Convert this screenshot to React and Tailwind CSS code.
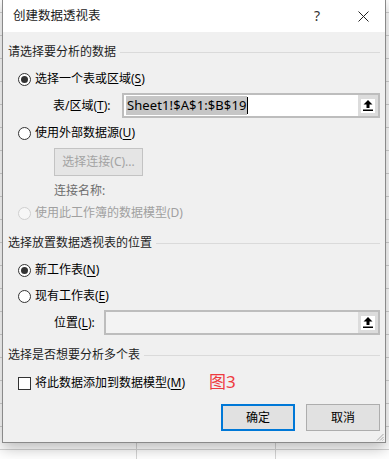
import React from "react";

function Radio({ checked, disabled }) {
  return (
    <span
      className={`w-[13px] h-[13px] shrink-0 rounded-full border flex items-center justify-center ${
        disabled ? "border-[#cfcfcf] bg-[#f7f7f7]" : "border-[#333333] bg-white"
      }`}
    >
      {checked && <span className="w-[7px] h-[7px] rounded-full bg-[#333333]" />}
    </span>
  );
}

function U({ children }) {
  return <span className="underline underline-offset-[2px] decoration-[1px]">{children}</span>;
}

function Section({ children }) {
  return (
    <div className="h-[20px] flex items-center pl-[5px] pr-[5px]">
      <span className="text-[#1e1e1e]">{children}</span>
      <div className="flex-1 h-px bg-[#dadada] ml-[4px]" />
    </div>
  );
}

function UpBtn() {
  return (
    <div className="w-[20px] h-full bg-[#dcdcdc] flex items-center justify-center">
      <div className="w-[14px] h-[14px] bg-white flex items-center justify-center">
        <svg width="10" height="11" viewBox="0 0 10 11">
          <path d="M5 0 L9.5 4.5 H6.5 V8 H3.5 V4.5 H0.5 Z" fill="#000" />
          <rect x="0" y="9.5" width="10" height="1.5" fill="#000" />
        </svg>
      </div>
    </div>
  );
}

export default function App() {
  return (
    <div className="relative w-[389px] h-[459px] overflow-hidden bg-white font-['Noto_Sans','Noto_Sans_CJK_SC',sans-serif] text-[12px] leading-none text-black">
      <svg className="absolute inset-0" width="389" height="459">
        <line x1="136.5" y1="0" x2="136.5" y2="459" stroke="#d4d4d4" />
        <line x1="275.5" y1="0" x2="275.5" y2="459" stroke="#d4d4d4" />
        {[12, 35, 58, 81, 104, 127, 150, 173, 196, 219, 242, 265, 288, 311, 334, 357, 380, 403, 426, 449].map((y) => (
          <line key={y} x1="0" y1={y + 0.5} x2="389" y2={y + 0.5} stroke="#d4d4d4" />
        ))}
      </svg>
      <div className="relative ml-[2px] w-[384px] h-[443px] border-l border-r border-b border-[#8a8a8a] bg-[#f0f0f0] shadow-[0_5px_14px_rgba(0,0,0,0.28)] flex flex-col">
        {/* title bar */}
        <div className="h-[32px] bg-white flex items-center pl-[10px] shrink-0">
          <span className="text-[12.5px] text-[#1a1a1a]">创建数据透视表</span>
          <span className="ml-auto text-[14px] text-[#333] w-[20px] text-center">?</span>
          <div className="w-[44px] flex justify-center ml-[14px] mr-0">
            <svg width="11" height="11" viewBox="0 0 11 11">
              <path d="M0.5 0.5 L10.5 10.5 M10.5 0.5 L0.5 10.5" stroke="#222" strokeWidth="1" />
            </svg>
          </div>
        </div>

        <div className="mt-[10px]">
          <Section>请选择要分析的数据</Section>
        </div>

        <div className="mt-[7px] h-[20px] flex items-center pl-[15px] gap-[4px]">
          <Radio checked />
          <span>选择一个表或区域(<U>S</U>)</span>
        </div>

        <div className="mt-[4px] h-[25px] flex items-center">
          <span className="ml-[50px] w-[69px]">表/区域(<U>T</U>):</span>
          <div className="w-[258px] h-[25px] border-2 border-[#bdbdbd] bg-white flex items-stretch">
            <div className="flex-1 flex items-center pl-[2px]">
              <span className="bg-[#c6c6c6] h-[19px] flex items-center pl-[1px] pr-[1px] text-[13px] tracking-[0.1px]">Sheet1!$A$1:$B$19</span>
              <span className="w-px h-[17px] bg-black" />
            </div>
            <UpBtn />
          </div>
        </div>

        <div className="mt-[5px] h-[20px] flex items-center pl-[15px] gap-[4px]">
          <Radio />
          <span>使用外部数据源(<U>U</U>)</span>
        </div>

        <div className="mt-[5px] h-[28px] flex">
          <div className="ml-[51px] w-[89px] h-[28px] border border-[#c3c3c3] bg-[#e5e5e5] flex items-center justify-center text-[#a3a3a3]">
            选择连接(C)...
          </div>
        </div>

        <div className="mt-[5px] h-[20px] flex items-center pl-[51px] text-[#6d6d6d]">连接名称:</div>

        <div className="mt-[2px] h-[20px] flex items-center pl-[15px] gap-[4px] text-[#a0a0a0]">
          <Radio disabled />
          <span>使用此工作簿的数据模型(D)</span>
        </div>

        <div className="mt-[10px]">
          <Section>选择放置数据透视表的位置</Section>
        </div>

        <div className="mt-[7px] h-[20px] flex items-center pl-[15px] gap-[4px]">
          <Radio checked />
          <span>新工作表(<U>N</U>)</span>
        </div>

        <div className="mt-[6px] h-[20px] flex items-center pl-[15px] gap-[4px]">
          <Radio />
          <span>现有工作表(<U>E</U>)</span>
        </div>

        <div className="mt-[4px] h-[25px] flex items-center">
          <span className="ml-[51px] w-[50px]">位置(<U>L</U>):</span>
          <div className="w-[276px] h-[25px] border-2 border-[#bdbdbd] bg-[#f3f3f3] flex items-stretch">
            <div className="flex-1" />
            <UpBtn />
          </div>
        </div>

        <div className="mt-[10px]">
          <Section>选择是否想要分析多个表</Section>
        </div>

        <div className="mt-[8px] h-[20px] flex items-center pl-[15px] gap-[4px]">
          <span className="w-[13px] h-[13px] border border-[#333333] bg-white shrink-0" />
          <span>将此数据添加到数据模型(<U>M</U>)</span>
          <span className="ml-[20px] text-[17px] text-[#ee3b3f] -mt-[3px]">图3</span>
        </div>

        <div className="mt-[11px] h-[27px] flex justify-end pr-[5px] gap-[11px]">
          <div className="w-[74px] h-[27px] border-2 border-[#0078d7] bg-[#e1e1e1] flex items-center justify-center">确定</div>
          <div className="w-[74px] h-[27px] border border-[#adadad] bg-[#e1e1e1] flex items-center justify-center">取消</div>
        </div>

        <div className="flex-1 flex items-end justify-end pr-[1px] pb-[1px]">
          <svg width="8" height="8" viewBox="0 0 8 8">
            <path d="M7.5 1 L1 7.5 M7.5 4 L4 7.5 M7.5 6.5 L6.5 7.5" stroke="#a8a8a8" strokeWidth="1" />
          </svg>
        </div>
      </div>
    </div>
  );
}
